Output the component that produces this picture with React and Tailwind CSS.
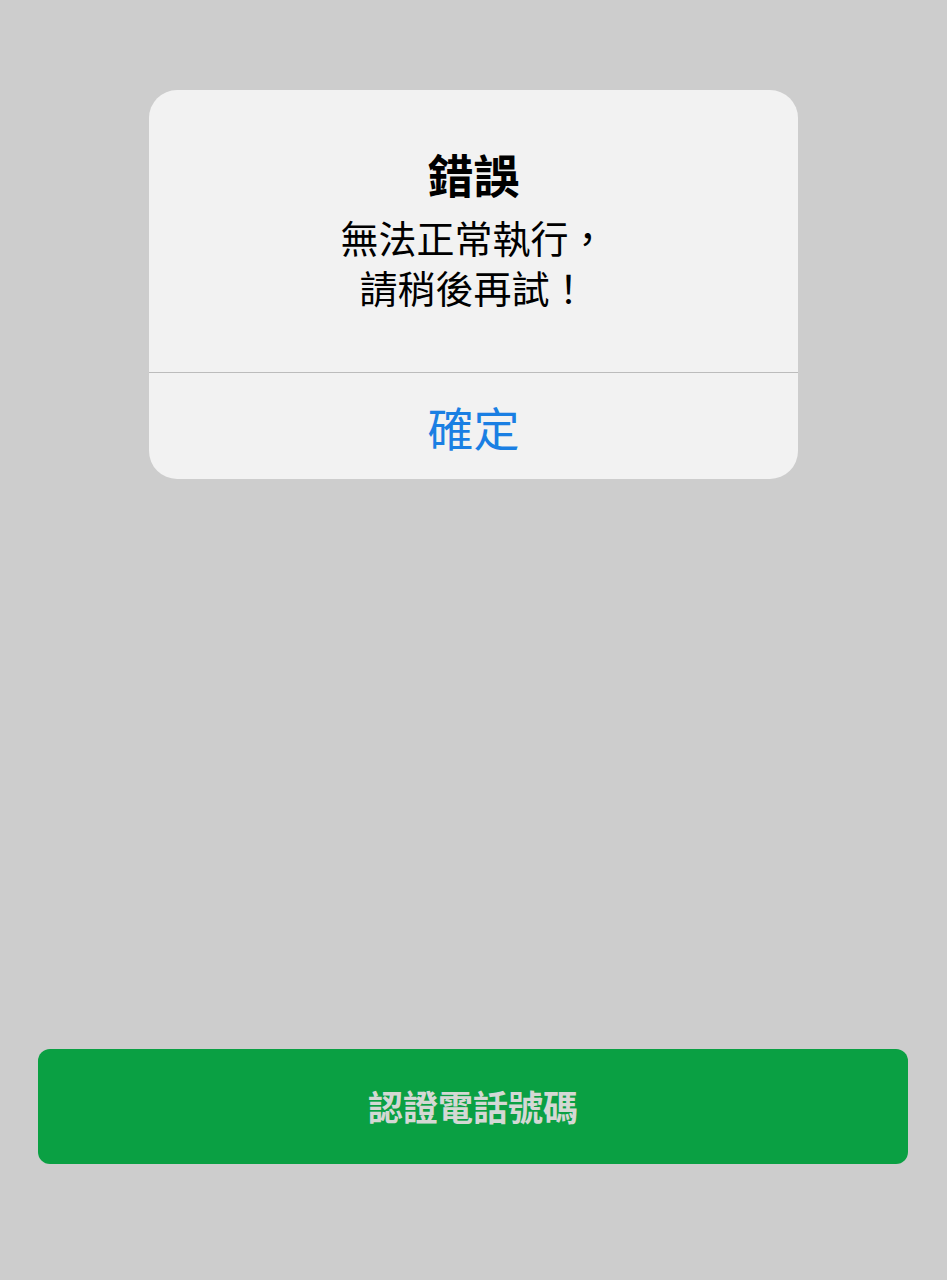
export default function App() {
  return (
    <div
      className="min-h-[1280px] w-full bg-[#cdcdcd] flex flex-col"
      style={{ fontFamily: '"Noto Sans CJK TC", "Noto Sans", sans-serif' }}
    >
      <div className="mt-[90px] mx-auto w-[649px] rounded-[28px] bg-[#f2f2f2] overflow-hidden">
        <div className="pt-[58px] pb-[60px] flex flex-col items-center text-black">
          <div className="text-[46px] leading-[50px] font-bold">錯誤</div>
          <div className="mt-[14px] text-[38px] leading-[50px] text-center">
            <div>無法正常執行，</div>
            <div>請稍後再試！</div>
          </div>
        </div>
        <div className="h-px bg-[#bcbcbc]" />
        <div className="h-[106px] flex items-center justify-center text-[46px] text-[#1a7fe3]">
          確定
        </div>
      </div>
      <div className="mt-auto mb-[116px] ml-[38px] mr-[39px] h-[115px] rounded-[12px] bg-[#0aa043] flex items-center justify-center text-[35px] font-bold text-[#d4d8d4]">
        認證電話號碼
      </div>
    </div>
  );
}
